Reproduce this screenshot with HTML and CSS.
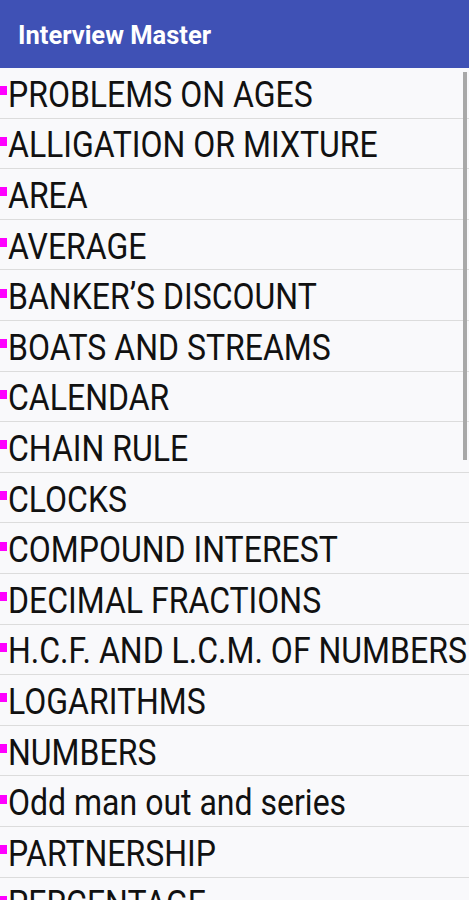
FILE: index.html
```html
<!DOCTYPE html>
<html>
<head>
<meta charset="utf-8">
<link rel="stylesheet" href="styles.css">
</head>
<body>
<div class="app">
  <header class="bar"><span class="title">Interview Master</span></header>
  <ul class="list">
    <li class="row"><span class="mark"></span><span class="label">PROBLEMS ON AGES</span></li>
    <li class="row"><span class="mark"></span><span class="label">ALLIGATION OR MIXTURE</span></li>
    <li class="row"><span class="mark"></span><span class="label">AREA</span></li>
    <li class="row"><span class="mark"></span><span class="label">AVERAGE</span></li>
    <li class="row"><span class="mark"></span><span class="label">BANKER’S DISCOUNT</span></li>
    <li class="row"><span class="mark"></span><span class="label">BOATS AND STREAMS</span></li>
    <li class="row"><span class="mark"></span><span class="label">CALENDAR</span></li>
    <li class="row"><span class="mark"></span><span class="label">CHAIN RULE</span></li>
    <li class="row"><span class="mark"></span><span class="label">CLOCKS</span></li>
    <li class="row"><span class="mark"></span><span class="label">COMPOUND INTEREST</span></li>
    <li class="row"><span class="mark"></span><span class="label">DECIMAL FRACTIONS</span></li>
    <li class="row"><span class="mark"></span><span class="label">H.C.F. AND L.C.M. OF NUMBERS</span></li>
    <li class="row"><span class="mark"></span><span class="label">LOGARITHMS</span></li>
    <li class="row"><span class="mark"></span><span class="label">NUMBERS</span></li>
    <li class="row"><span class="mark"></span><span class="label">Odd man out and series</span></li>
    <li class="row"><span class="mark"></span><span class="label">PARTNERSHIP</span></li>
    <li class="row"><span class="mark"></span><span class="label">PERCENTAGE</span></li>
  </ul>
  <div class="scrollbar"></div>
</div>
</body>
</html>
```
FILE: styles.css
```css
html, body {
  margin: 0;
  padding: 0;
  background: #f9f9fb;
}
.app {
  position: relative;
  width: 469px;
  height: 900px;
  overflow: hidden;
  font-family: Roboto, "Liberation Sans", sans-serif;
}
.bar {
  height: 68px;
  background: #3f51b5;
  display: flex;
  align-items: center;
  padding-left: 18px;
  box-sizing: border-box;
}
.title {
  color: #fff;
  font-size: 25.5px;
  font-weight: 700;
  margin-top: 1px;
}
.list {
  list-style: none;
  margin: 0;
  padding: 0;
}
.row {
  height: 50.6px;
  box-sizing: border-box;
  border-bottom: 1px solid #dcdcdc;
  display: flex;
  align-items: center;
  white-space: nowrap;
  overflow: hidden;
}
.mark {
  width: 7px;
  height: 9px;
  background: #ff00ff;
  flex: none;
  margin-top: -4px;
}
.label {
  font-size: 37px;
  color: #111;
  display: inline-block;
  transform: scaleX(0.865);
  transform-origin: left center;
  margin-left: 1px;
  margin-top: 3px;
}
.scrollbar {
  position: absolute;
  left: 463px;
  top: 72px;
  width: 4px;
  height: 388px;
  background: #a8a8a8;
}
```
